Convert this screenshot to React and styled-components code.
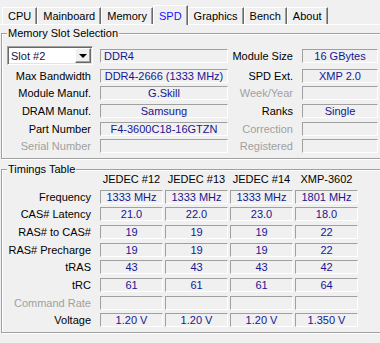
import React from 'react';
import styled, { createGlobalStyle } from 'styled-components';

const GlobalStyle = createGlobalStyle`
  html, body {
    margin: 0;
    padding: 0;
    background: #f0f0f0;
    overflow: hidden;
  }
  body {
    font-family: "Liberation Sans", Arial, sans-serif;
    font-size: 11px;
    color: #000;
  }
`;

const tabs = ['CPU', 'Mainboard', 'Memory', 'SPD', 'Graphics', 'Bench', 'About'];

// left / right pairs of the slot section, after the first row
const slotRows = [
  { l: 'Max Bandwidth', v: 'DDR4-2666 (1333 MHz)', r: 'SPD Ext.', rv: 'XMP 2.0' },
  { l: 'Module Manuf.', v: 'G.Skill', r: 'Week/Year', rv: '', rOff: true },
  { l: 'DRAM Manuf.', v: 'Samsung', r: 'Ranks', rv: 'Single' },
  { l: 'Part Number', v: 'F4-3600C18-16GTZN', r: 'Correction', rv: '', rOff: true },
  { l: 'Serial Number', v: '', lOff: true, r: 'Registered', rv: '', rOff: true }
];

const heads = ['JEDEC #12', 'JEDEC #13', 'JEDEC #14', 'XMP-3602'];

const timings = [
  { l: 'Frequency', v: ['1333 MHz', '1333 MHz', '1333 MHz', '1801 MHz'] },
  { l: 'CAS# Latency', v: ['21.0', '22.0', '23.0', '18.0'] },
  { l: 'RAS# to CAS#', v: ['19', '19', '19', '22'] },
  { l: 'RAS# Precharge', v: ['19', '19', '19', '22'] },
  { l: 'tRAS', v: ['43', '43', '43', '42'] },
  { l: 'tRC', v: ['61', '61', '61', '64'] },
  { l: 'Command Rate', v: ['', '', '', ''], off: true },
  { l: 'Voltage', v: ['1.20 V', '1.20 V', '1.20 V', '1.350 V'] }
];

function App() {
  return (
    <>
      <GlobalStyle />
      <S.Window>
        <S.TabBar>
          {tabs.map((t) => (
            <S.Tab key={t} $active={t === 'SPD'}>
              {t}
            </S.Tab>
          ))}
        </S.TabBar>

        <S.Group>
          <S.Title>Memory Slot Selection</S.Title>
          <S.SlotGrid>
            <S.Combo>
              <S.ComboText>Slot #2</S.ComboText>
              <S.ComboButton>
                <S.Arrow />
              </S.ComboButton>
            </S.Combo>
            <S.Field $left>DDR4</S.Field>
            <S.Label>Module Size</S.Label>
            <S.Field>16 GBytes</S.Field>
            {slotRows.map((row) => (
              <React.Fragment key={row.l}>
                <S.Label $off={row.lOff}>{row.l}</S.Label>
                <S.Field>{row.v}</S.Field>
                <S.Label $off={row.rOff}>{row.r}</S.Label>
                <S.Field>{row.rv}</S.Field>
              </React.Fragment>
            ))}
          </S.SlotGrid>
        </S.Group>

        <S.Group $second>
          <S.Title>Timings Table</S.Title>
          <S.TimingGrid>
            <span />
            {heads.map((h) => (
              <S.Head key={h}>{h}</S.Head>
            ))}
            {timings.map((row) => (
              <React.Fragment key={row.l}>
                <S.Label $off={row.off} $pad={7}>
                  {row.l}
                </S.Label>
                {row.v.map((v, i) => (
                  <S.Field key={i}>{v}</S.Field>
                ))}
              </React.Fragment>
            ))}
          </S.TimingGrid>
        </S.Group>
      </S.Window>
    </>
  );
}

export default App;

const S = {
  Window: styled.div`
    width: 380px;
    height: 343px;
    overflow: hidden;
    background: #f0f0f0;
  `,
  TabBar: styled.div`
    display: flex;
    align-items: flex-end;
    height: 24px;
    padding-left: 2px;
    border-bottom: 1px solid #fff;
  `,
  Tab: styled.div`
    position: relative;
    box-sizing: border-box;
    height: ${(p) => (p.$active ? '20px' : '17px')};
    margin-bottom: ${(p) => (p.$active ? '-1px' : '0')};
    padding: 0 5px;
    display: flex;
    align-items: center;
    background: #f0f0f0;
    border-top: 1px solid #fff;
    border-left: 1px solid #fff;
    border-right: 1px solid #696969;
    box-shadow: inset -1px 0 0 #a0a0a0;
    color: ${(p) => (p.$active ? '#1414ff' : '#000')};
    white-space: nowrap;
  `,
  Group: styled.div`
    position: relative;
    width: 420px;
    margin: ${(p) => (p.$second ? '10px' : '8px')} 0 0 1px;
    padding: ${(p) => (p.$second ? '3px 0 5px' : '12px 0 4.5px')};
    border: 1px solid #a0a0a0;
    box-shadow: inset 1px 1px 0 #fff, 1px 1px 0 #fff;
  `,
  Title: styled.span`
    position: absolute;
    top: -7px;
    left: 5px;
    padding: 0 1px;
    line-height: 13px;
    background: #f0f0f0;
  `,
  SlotGrid: styled.div`
    display: grid;
    grid-template-columns: 98px 128px 74px 76px;
    grid-template-rows: 19px repeat(5, 14px);
    row-gap: 3.7px;
    align-items: center;
  `,
  TimingGrid: styled.div`
    display: grid;
    grid-template-columns: 96px repeat(4, 63px);
    grid-template-rows: 13px repeat(8, 14px);
    column-gap: 2px;
    row-gap: 3.7px;
    align-items: center;
  `,
  Label: styled.div`
    text-align: right;
    padding-right: ${(p) => p.$pad ?? 9}px;
    white-space: nowrap;
    line-height: 14px;
    color: ${(p) => (p.$off ? '#a0a0a0' : '#000')};
  `,
  Head: styled.div`
    text-align: center;
    line-height: 13px;
    white-space: nowrap;
  `,
  Field: styled.div`
    box-sizing: border-box;
    height: 14px;
    padding: 0 ${(p) => (p.$left ? '3px' : '0')};
    line-height: 12px;
    border-style: solid;
    border-width: 1px;
    border-color: #a0a0a0 #fff #fff #a0a0a0;
    color: #161690;
    text-align: ${(p) => (p.$left ? 'left' : 'center')};
    white-space: nowrap;
    overflow: hidden;
  `,
  Combo: styled.div`
    box-sizing: border-box;
    display: flex;
    align-items: center;
    justify-content: space-between;
    width: 86px;
    height: 19px;
    margin-left: 5px;
    padding: 2px;
    background: #fff;
    border-style: solid;
    border-width: 1px;
    border-color: #a0a0a0 #fff #fff #a0a0a0;
    box-shadow: inset 1px 1px 0 #696969, inset -1px -1px 0 #e3e3e3;
  `,
  ComboText: styled.span`
    padding-left: 1px;
    color: #10104a;
  `,
  ComboButton: styled.div`
    box-sizing: border-box;
    display: flex;
    align-items: center;
    justify-content: center;
    width: 16px;
    height: 15px;
    margin-right: -1px;
    background: #f0f0f0;
    border-style: solid;
    border-width: 1px;
    border-color: #fff #696969 #696969 #fff;
    box-shadow: inset -1px -1px 0 #a0a0a0;
  `,
  Arrow: styled.span`
    width: 0;
    height: 0;
    border-left: 4px solid transparent;
    border-right: 4px solid transparent;
    border-top: 4px solid #000;
  `
};
